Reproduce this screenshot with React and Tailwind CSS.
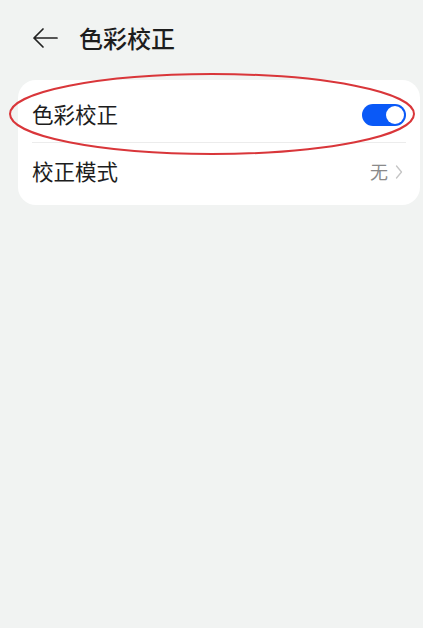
import React, { useState } from "react";

const font = { fontFamily: '"Noto Sans CJK SC", "Noto Sans", sans-serif' };

const Toggle = ({ on, onChange }) => (
  <button
    onClick={() => onChange(!on)}
    className={`relative w-[44px] h-[22px] rounded-full ${on ? "bg-[#0a59f7]" : "bg-gray-300"}`}
  >
    <span
      className={`absolute top-[2px] w-[18px] h-[18px] rounded-full bg-white ${on ? "right-[2px]" : "left-[2px]"}`}
    />
  </button>
);

export default function App() {
  const [enabled, setEnabled] = useState(true);

  return (
    <div className="w-[423px] h-[628px] bg-[#f1f3f2] overflow-hidden" style={font}>
      {/* Header */}
      <div className="flex items-center h-[56px] pt-[20px] pl-[32px]">
        <svg width="26" height="22" viewBox="0 0 26 22" fill="none" className="text-[#222]">
          <path d="M11 2 L2 11 L11 20 M2 11 H25" stroke="currentColor" strokeWidth="1.7" strokeLinecap="round" strokeLinejoin="round" />
        </svg>
        <h1 className="ml-[21px] text-[24px] leading-none font-medium text-[#1d1d1d]">色彩校正</h1>
      </div>

      {/* Card */}
      <div className="relative mt-[24px] ml-[18px] mr-[3px] bg-white rounded-[18px] px-[14px]">
        <div className="flex items-center justify-between h-[63px] pt-[7px] border-b border-[#ececec]">
          <span className="text-[21.5px] text-[#1d1d1d]">色彩校正</span>
          <Toggle on={enabled} onChange={setEnabled} />
        </div>
        <div className="flex items-center justify-between h-[62px] pb-[5px]">
          <span className="text-[21.5px] text-[#1d1d1d]">校正模式</span>
          <div className="flex items-center gap-[7px] pr-[3px]">
            <span className="text-[18px] text-[#8a8a8a]">无</span>
            <svg width="8" height="16" viewBox="0 0 8 16" fill="none">
              <path d="M1.5 2 L6.5 8 L1.5 14" stroke="#c4c4c4" strokeWidth="1.3" strokeLinecap="round" strokeLinejoin="round" />
            </svg>
          </div>
        </div>

        {/* red annotation */}
        <svg className="absolute left-[-10px] top-[-8px] pointer-events-none" width="410" height="86" viewBox="0 0 410 86">
          <ellipse cx="204" cy="42" rx="202" ry="40" fill="none" stroke="#d9363a" strokeWidth="2" />
        </svg>
      </div>
    </div>
  );
}
